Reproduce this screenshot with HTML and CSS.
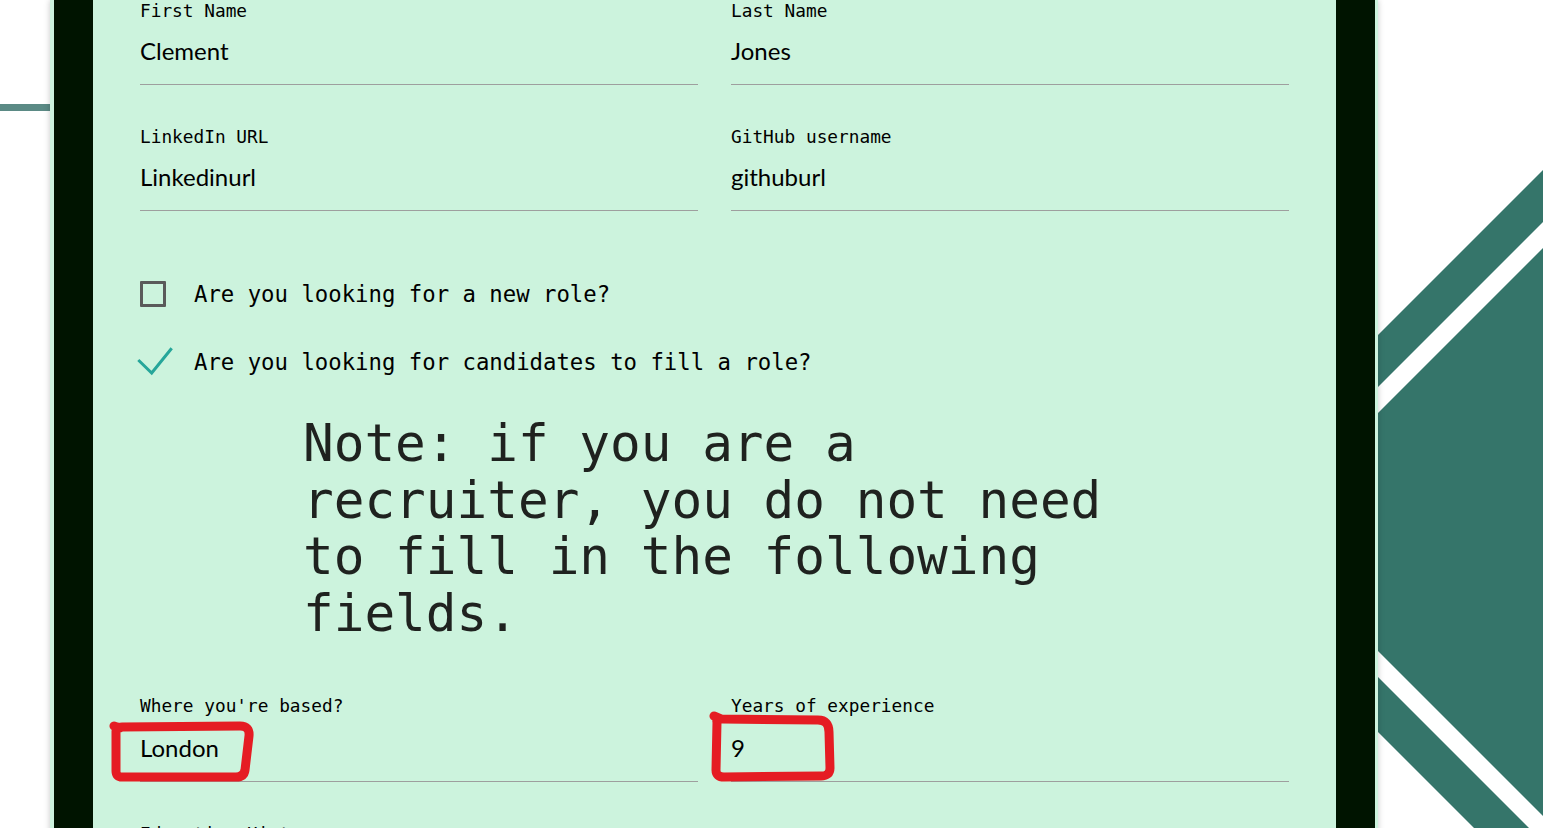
FILE: index.html
```html
<!DOCTYPE html>
<html lang="en">
<head>
<meta charset="utf-8">
<title>Profile form</title>
<link rel="stylesheet" href="styles.css">
</head>
<body>
<div class="page">
  <div class="side-bar"></div>
  <svg class="decor" width="243" height="828" viewBox="1300 0 243 828" aria-hidden="true">
    <polygon points="1300,413 1543,170 1543,222 1300,465" />
    <polygon points="1300,491 1543,248 1543,816 1300,573" />
    <polygon points="1300,599 1543,842 1543,897 1300,654" />
  </svg>

  <main class="card">
    <div class="frame">
      <form class="form">
        <div class="row">
          <div class="field">
            <label class="label">First Name</label>
            <div class="value">Clement</div>
          </div>
          <div class="field">
            <label class="label">Last Name</label>
            <div class="value">Jones</div>
          </div>
        </div>
        <div class="row row-gap">
          <div class="field">
            <label class="label">LinkedIn URL</label>
            <div class="value">Linkedinurl</div>
          </div>
          <div class="field">
            <label class="label">GitHub username</label>
            <div class="value">githuburl</div>
          </div>
        </div>

        <div class="check-row first-check">
          <span class="box"></span>
          <span class="check-text">Are you looking for a new role?</span>
        </div>
        <div class="check-row second-check">
          <span class="tick">
            <svg width="36" height="28" viewBox="0 0 36 28"><polyline points="1.3,13 14.7,26 34.7,1.3" /></svg>
          </span>
          <span class="check-text">Are you looking for candidates to fill a role?</span>
        </div>

        <p class="note">Note: if you are a recruiter, you do not need to fill in the following fields.</p>

        <div class="row row-note">
          <div class="field">
            <label class="label">Where you're based?</label>
            <div class="value">London</div>
          </div>
          <div class="field">
            <label class="label">Years of experience</label>
            <div class="value">9</div>
          </div>
        </div>
        <div class="row row-gap">
          <div class="field">
            <label class="label">Education History</label>
            <div class="value">&nbsp;</div>
          </div>
        </div>
      </form>
    </div>
  </main>

  <svg class="marks" width="1543" height="828" viewBox="0 0 1543 828" aria-hidden="true">
    <path d="M116,731 Q116,727 122,727 L240,726 Q250,726 249,736 L245,770 Q244,777 236,777 L122,777 Q116,777 116,771 Z M114,726 L120,728" />
    <path d="M717,722 Q716,719 722,719 L818,720 Q829,720 829,732 L830,768 Q830,776 821,776 L724,777 Q716,777 716,770 Z M714,716 L721,719" />
  </svg>
</div>
</body>
</html>
```

FILE: styles.css
```css
html, body {
  margin: 0;
  padding: 0;
  background: #ffffff;
  overflow: hidden;
}

.page {
  position: relative;
  width: 1543px;
  height: 828px;
  overflow: hidden;
}

.side-bar {
  position: absolute;
  left: 0;
  top: 104px;
  width: 50px;
  height: 7px;
  background: #5b8a85;
}

.decor {
  position: absolute;
  left: 1300px;
  top: 0;
}

.decor polygon {
  fill: #35756a;
}

.card {
  position: relative;
  margin-left: 50px;
  width: 1321px;
  padding: 0 3px 0 4px;
  background: #ccf3dd;
  box-shadow: 0 0 6px rgba(0, 0, 0, 0.22);
  min-height: 828px;
}

.frame {
  border-left: 39px solid #001400;
  border-right: 39px solid #001400;
  background: #ccf3dd;
  padding: 0 47px;
  min-height: 828px;
}

.form {
  display: flex;
  flex-direction: column;
}

.row {
  display: grid;
  grid-template-columns: 1fr 1fr;
  column-gap: 33px;
}

.row-gap {
  margin-top: 41px;
}

.row-note {
  margin-top: 53px;
}

.row-note .value {
  padding-top: 17px;
}

.label {
  display: block;
  font-family: "DejaVu Sans Mono", "Liberation Mono", monospace;
  font-size: 17.8px;
  line-height: 21px;
  color: #000000;
}

.value {
  font-family: Lato, "Noto Sans", sans-serif;
  font-size: 24px;
  line-height: 29px;
  color: #000000;
  padding: 15px 0 19px;
  border-bottom: 1px solid #9e9e9e;
}

.check-row {
  display: flex;
  align-items: center;
  gap: 28px;
  height: 26px;
}

.first-check {
  margin-top: 70px;
}

.second-check {
  margin-top: 42px;
}

.box {
  flex: 0 0 26px;
  width: 26px;
  height: 26px;
  box-sizing: border-box;
  border: 3px solid #5a5a5a;
  border-radius: 1px;
}

.tick {
  flex: 0 0 26px;
  width: 26px;
  height: 26px;
  overflow: visible;
}

.tick svg {
  display: block;
  margin: -2px 0 0 -3px;
  overflow: visible;
}

.tick polyline {
  fill: none;
  stroke: #26a69a;
  stroke-width: 3;
}

.check-text {
  font-family: "DejaVu Sans Mono", "Liberation Mono", monospace;
  font-size: 22.3px;
  line-height: 26px;
  color: #000000;
  white-space: nowrap;
}

.note {
  width: 823px;
  margin: 41px auto 0;
  font-family: "DejaVu Sans Mono", "Liberation Mono", monospace;
  font-size: 51px;
  line-height: 56.5px;
  color: #1f221f;
}

.marks {
  position: absolute;
  left: 0;
  top: 0;
  pointer-events: none;
}

.marks path {
  fill: none;
  stroke: #e51c23;
  stroke-width: 9;
  stroke-linecap: round;
  stroke-linejoin: round;
}
```
